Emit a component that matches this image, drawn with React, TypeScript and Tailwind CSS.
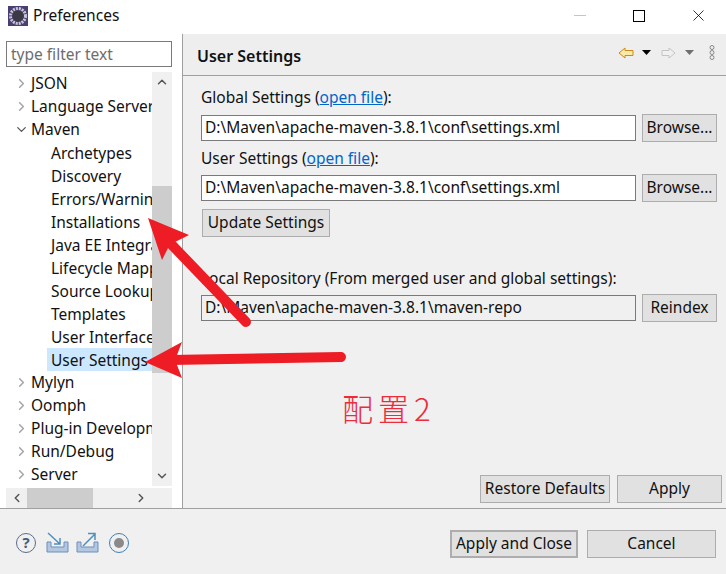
import { ChevronDown, ChevronLeft, ChevronRight, ChevronUp, X } from "lucide-react";

const font = "font-['Noto_Sans','Open_Sans',sans-serif]";

type Row = { label: string; kind: "closed" | "open" | "child"; selected?: boolean };

const rows: Row[] = [
  { label: "JSON", kind: "closed" },
  { label: "Language Servers", kind: "closed" },
  { label: "Maven", kind: "open" },
  { label: "Archetypes", kind: "child" },
  { label: "Discovery", kind: "child" },
  { label: "Errors/Warnings", kind: "child" },
  { label: "Installations", kind: "child" },
  { label: "Java EE Integration", kind: "child" },
  { label: "Lifecycle Mappings", kind: "child" },
  { label: "Source Lookup", kind: "child" },
  { label: "Templates", kind: "child" },
  { label: "User Interface", kind: "child" },
  { label: "User Settings", kind: "child", selected: true },
  { label: "Mylyn", kind: "closed" },
  { label: "Oomph", kind: "closed" },
  { label: "Plug-in Development", kind: "closed" },
  { label: "Run/Debug", kind: "closed" },
  { label: "Server", kind: "closed" },
];

function TreeRow({ row }: { row: Row }) {
  if (row.kind === "child") {
    return (
      <div className="flex h-[23px] items-center pl-[41px]">
        <span className={`w-full whitespace-nowrap pl-[4px] pt-[1px] leading-[22px] ${row.selected ? "bg-[#cce8ff]" : ""}`}>
          {row.label}
        </span>
      </div>
    );
  }
  return (
    <div className="flex h-[23px] items-center whitespace-nowrap">
      <span className="flex w-[25px] shrink-0 justify-end pr-[2px]">
        {row.kind === "open" ? (
          <ChevronDown size={15} className="text-[#555]" strokeWidth={2} />
        ) : (
          <ChevronRight size={15} className="text-[#a6a6a6]" strokeWidth={2.5} />
        )}
      </span>
      <span className="pt-[1px]">{row.label}</span>
    </div>
  );
}

function PathInput({ value, className }: { value: string; className: string }) {
  return (
    <div className={`flex h-[26px] w-[435px] items-center border border-[#7a7a7a] px-[3px] ${className}`}>
      <span className="whitespace-nowrap">{value}</span>
    </div>
  );
}

function Button({ label, className = "" }: { label: string; className?: string }) {
  return (
    <div className={`flex items-center justify-center whitespace-nowrap border border-[#adadad] bg-[#e1e1e1] ${className}`}>
      {label}
    </div>
  );
}

function Link({ label, hint }: { label: string; hint: string }) {
  return (
    <div className="h-[23px] leading-[23px]">
      {label} (<span className="text-[#0066cc] underline">{hint}</span>):
    </div>
  );
}

function Annotations() {
  return (
    <svg className="pointer-events-none absolute left-0 top-0" width="726" height="574">
      <path d="M246 322 L172 245" stroke="#ee1c25" strokeWidth="10" strokeLinecap="round" />
      <path d="M148 218 L189 235 L175 242 L168 248 L162 260 Z" fill="#ee1c25" />
      <path d="M341 357 L170 360" stroke="#ee1c25" strokeWidth="10" strokeLinecap="round" />
      <path d="M145 362 L182 342 L177 355 L177 365 L182 378 Z" fill="#ee1c25" />
    </svg>
  );
}

export default function App() {
  return (
    <div className={`${font} relative flex h-[574px] w-[726px] flex-col overflow-hidden bg-white text-[15.5px] text-[#111]`}>
      <header className="flex h-[34px] shrink-0 items-center pb-[3px]">
        <svg className="ml-[8px]" width="20" height="20" viewBox="0 0 20 20">
          <rect width="20" height="20" fill="#4b3f72" />
          <circle cx="10" cy="10" r="7.5" fill="none" stroke="#c9c6d4" strokeWidth="3" strokeDasharray="2 1" />
          <circle cx="10" cy="10" r="5.5" fill="#3a3a46" />
        </svg>
        <span className="ml-[5px]">Preferences</span>
        <div className="ml-auto flex items-center">
          <div className="mr-[47px] h-px w-[12px] bg-[#c4c4c4]" />
          <div className="mr-[44px] h-[12px] w-[12px] border border-black" />
          <X size={19} className="mr-[18px] text-black" strokeWidth={1} />
        </div>
      </header>

      <div className="flex min-h-0 flex-1">
        <aside className="flex w-[183px] shrink-0 flex-col border-r border-[#a0a0a0] pl-[6px] pt-[7px]">
          <div className="flex h-[26px] w-[166px] items-center border border-[#7a7a7a] px-[4px] pt-[1px] text-[#6d6d6d]">
            type filter text
          </div>
          <div className="mt-[5px] flex w-[166px] flex-1 flex-col">
            <div className="flex h-[414px]">
              <div className="w-[146px] overflow-hidden">
                {rows.map((row) => (
                  <TreeRow key={row.label} row={row} />
                ))}
              </div>
              <div className="flex w-[20px] flex-col bg-[#f0f0f0]">
                <div className="flex h-[20px] items-center justify-center">
                  <ChevronUp size={14} className="text-[#555]" strokeWidth={2.5} />
                </div>
                <div className="mt-[94px] h-[187px] bg-[#cdcdcd]" />
                <div className="mt-auto flex h-[20px] items-center justify-center">
                  <ChevronDown size={14} className="text-[#555]" strokeWidth={2.5} />
                </div>
              </div>
            </div>
            <div className="mt-[2px] flex h-[20px] items-center bg-[#f0f0f0]">
              <div className="flex w-[21px] justify-center">
                <ChevronLeft size={14} className="text-[#555]" strokeWidth={2.5} />
              </div>
              <div className="h-full w-[66px] bg-[#cdcdcd]" />
              <div className="ml-auto flex w-[62px] justify-center">
                <ChevronRight size={14} className="text-[#555]" strokeWidth={2.5} />
              </div>
            </div>
          </div>
        </aside>

        <main className="flex min-w-0 flex-1 flex-col bg-[#f0f0f0]">
          <div className="flex h-[42px] shrink-0 items-center border-b border-[#a0a0a0] bg-[#eeeeee] pl-[14px]">
            <span className="pt-[2px] text-[16px] font-semibold">User Settings</span>
            <div className="ml-auto flex items-center pb-[4px] pr-[11px]">
              <svg width="16" height="12" viewBox="0 0 16 12">
                <path d="M1 6 L7 1 V3.5 H15 V8.5 H7 V11 Z" fill="#fde9a6" stroke="#c98a1b" />
              </svg>
              <svg className="ml-[8px]" width="9" height="5" viewBox="0 0 9 5">
                <path d="M0 0 H9 L4.5 5 Z" fill="#000" />
              </svg>
              <svg className="ml-[10px]" width="15" height="12" viewBox="0 0 15 12">
                <path d="M14 6 L8 1 V3.5 H1 V8.5 H8 V11 Z" fill="#f0f0f0" stroke="#c4c4c4" />
              </svg>
              <svg className="ml-[9px]" width="9" height="5" viewBox="0 0 9 5">
                <path d="M0 0 H9 L4.5 5 Z" fill="#6f6f6f" />
              </svg>
              <svg className="ml-[15px]" width="6" height="15" viewBox="0 0 6 15">
                <circle cx="3" cy="2.5" r="2" fill="none" stroke="#888" />
                <circle cx="3" cy="7.5" r="2" fill="none" stroke="#888" />
                <circle cx="3" cy="12.5" r="2" fill="none" stroke="#888" />
              </svg>
            </div>
          </div>

          <div className="flex flex-1 flex-col pl-[18px] pr-[4px] pt-[10px]">
            <Link label="Global Settings" hint="open file" />
            <div className="mt-[5px] flex items-center">
              <PathInput value="D:\Maven\apache-maven-3.8.1\conf\settings.xml" className="bg-white" />
              <Button label="Browse..." className="ml-[6px] h-[28px] w-[75px]" />
            </div>
            <div className="mt-[5px]">
              <Link label="User Settings" hint="open file" />
            </div>
            <div className="mt-[4px] flex items-center">
              <PathInput value="D:\Maven\apache-maven-3.8.1\conf\settings.xml" className="bg-white" />
              <Button label="Browse..." className="ml-[6px] h-[28px] w-[75px]" />
            </div>
            <Button label="Update Settings" className="ml-[1px] mt-[7px] h-[28px] w-[128px]" />
            <div className="mt-[30px] h-[23px] leading-[23px]">Local Repository (From merged user and global settings):</div>
            <div className="mt-[4px] flex items-center">
              <PathInput value="D:\Maven\apache-maven-3.8.1\maven-repo" className="bg-[#f0f0f0]" />
              <Button label="Reindex" className="ml-[6px] h-[28px] w-[75px]" />
            </div>
            <div className="ml-[141px] mt-[68px] font-['Noto_Sans_CJK_SC',serif] text-[31px] font-light leading-[36px] tracking-[5px] text-[#ee2b3a]">
              配置2
            </div>
            <div className="mt-auto flex justify-end gap-[7px] pb-[5px]">
              <Button label="Restore Defaults" className="h-[28px] w-[130px]" />
              <Button label="Apply" className="h-[28px] w-[105px]" />
            </div>
          </div>
        </main>
      </div>

      <footer className="flex h-[66px] shrink-0 items-center border-t border-[#a0a0a0] bg-[#f0f0f0] pt-[2px]">
        <div className="ml-[16px] flex h-[20px] w-[20px] items-center justify-center rounded-full border border-[#5c6d8a] text-[15px] font-bold leading-none text-[#4a5a78]">
          ?
        </div>
        <svg className="ml-[9px]" width="24" height="22" viewBox="0 0 24 22">
          <path d="M2 10 H6 V15 H19 V10 H23 V20 H2 Z" fill="#b4c7e0" stroke="#6d8fbb" />
          <path d="M3 1 L15 12 M15 6 V12 H9" fill="none" stroke="#4f8fbf" strokeWidth="1.5" />
        </svg>
        <svg className="ml-[7px]" width="24" height="22" viewBox="0 0 24 22">
          <path d="M1 10 H5 V15 H18 V10 H22 V20 H1 Z" fill="#b4c7e0" stroke="#6d8fbb" />
          <path d="M7 14 L19 2 M12 1.5 H19 V8" fill="none" stroke="#4f8fbf" strokeWidth="1.5" />
        </svg>
        <div className="ml-[9px] flex h-[20px] w-[20px] items-center justify-center rounded-full border border-[#3f7fb5]">
          <div className="h-[10px] w-[10px] rounded-full bg-[#8a8a8a]" />
        </div>
        <div className="ml-auto mr-[10px] flex items-center gap-[9px] pt-[2px]">
          <Button label="Apply and Close" className="h-[28px] w-[128px] border-2 border-[#0078d7]" />
          <Button label="Cancel" className="h-[28px] w-[129px]" />
        </div>
      </footer>

      <Annotations />
    </div>
  );
}
